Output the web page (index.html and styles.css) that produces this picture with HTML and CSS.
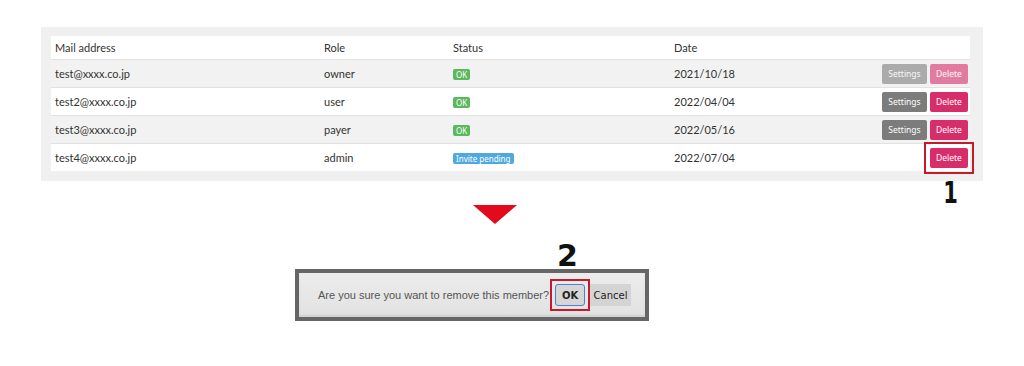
FILE: index.html
```html
<!DOCTYPE html>
<html lang="en">
<head>
    <meta charset="UTF-8">
    <meta name="viewport" content="width=device-width, initial-scale=1.0">
    <title>Remove member</title>
    <link rel="stylesheet" href="styles.css">
</head>
<body>

    <!-- Member list -->
    <div class="panel">
        <div class="members">
            <div class="row head">
                <div class="cell">Mail address</div>
                <div class="cell">Role</div>
                <div class="cell">Status</div>
                <div class="cell">Date</div>
                <div class="cell actions"></div>
            </div>
            <div class="row shade">
                <div class="cell">test@xxxx.co.jp</div>
                <div class="cell">owner</div>
                <div class="cell"><span class="badge ok">OK</span></div>
                <div class="cell">2021/10/18</div>
                <div class="cell actions faded">
                    <button class="btn settings">Settings</button>
                    <button class="btn delete">Delete</button>
                </div>
            </div>
            <div class="row">
                <div class="cell">test2@xxxx.co.jp</div>
                <div class="cell">user</div>
                <div class="cell"><span class="badge ok">OK</span></div>
                <div class="cell">2022/04/04</div>
                <div class="cell actions">
                    <button class="btn settings">Settings</button>
                    <button class="btn delete">Delete</button>
                </div>
            </div>
            <div class="row shade">
                <div class="cell">test3@xxxx.co.jp</div>
                <div class="cell">payer</div>
                <div class="cell"><span class="badge ok">OK</span></div>
                <div class="cell">2022/05/16</div>
                <div class="cell actions">
                    <button class="btn settings">Settings</button>
                    <button class="btn delete">Delete</button>
                </div>
            </div>
            <div class="row">
                <div class="cell">test4@xxxx.co.jp</div>
                <div class="cell">admin</div>
                <div class="cell"><span class="badge pending">Invite pending</span></div>
                <div class="cell">2022/07/04</div>
                <div class="cell actions">
                    <span class="mark">
                        <button class="btn delete">Delete</button>
                        <span class="step step-1">1</span>
                    </span>
                </div>
            </div>
        </div>
    </div>

    <!-- Arrow -->
    <div class="arrow"></div>

    <!-- Confirm dialog -->
    <div class="confirm-wrap">
        <div class="confirm">
            <span class="question">Are you sure you want to remove this member?</span>
            <span class="mark mark-ok">
                <button class="dlg-btn ok-btn">OK</button>
                <span class="step step-2">2</span>
            </span>
            <button class="dlg-btn cancel-btn">Cancel</button>
        </div>
    </div>

</body>
</html>
```

FILE: styles.css
```css
/* Basic Reset */
* {
    box-sizing: border-box;
    margin: 0;
    padding: 0;
}

body {
    font-family: Lato, 'Noto Sans', sans-serif;
    background: #fff;
    color: #333;
    width: 1024px;
    height: 366px;
    overflow: hidden;
}

/* Member list */
.panel {
    margin: 27px 0 0 41px;
    width: 942px;
    background: #f0f0f0;
    padding: 9px 13px 10px 10px;
}

.members {
    background: #fff;
}

.row {
    display: grid;
    grid-template-columns: 269px 129px 221px 1fr auto;
    align-items: center;
    height: 28px;
    border-top: 1px solid #e2e2e2;
    font-size: 11px;
}

.row.head {
    height: 23px;
    border-top: none;
}

.row.shade {
    background: #f2f2f2;
}

.cell {
    padding-left: 4px;
    white-space: nowrap;
}

.actions {
    display: flex;
    gap: 3px;
    padding-right: 2px;
}

.faded {
    opacity: 0.6;
}

.btn {
    font-family: 'Noto Sans', sans-serif;
    font-size: 8.5px;
    color: #fff;
    border: none;
    border-radius: 2px;
    height: 20px;
    cursor: pointer;
}

.settings {
    background: #7c7c7c;
    width: 45px;
}

.delete {
    background: #d82d6b;
    width: 38px;
}

.badge {
    display: inline-block;
    font-family: 'Noto Sans', sans-serif;
    font-size: 8px;
    color: #fff;
    border-radius: 2px;
    line-height: 11px;
    padding: 0 3px;
    vertical-align: middle;
}

.ok {
    background: #5cb85c;
}

.pending {
    background: #4ea9de;
}

/* Annotations */
.mark {
    position: relative;
    display: inline-flex;
    outline: 2px solid #c41a2c;
    outline-offset: 4px;
}

.step {
    position: absolute;
    font-family: 'DejaVu Sans', sans-serif;
    font-weight: bold;
    color: #111;
    line-height: 1;
}

.step-1 {
    top: 30px;
    left: 10px;
    font-size: 30px;
    transform: scaleX(0.7);
}

.step-2 {
    top: -43px;
    left: 2px;
    font-size: 30px;
}

/* Arrow */
.arrow {
    width: 0;
    height: 0;
    margin: 24px 0 0 473px;
    border-left: 22px solid transparent;
    border-right: 22px solid transparent;
    border-top: 19px solid #e20a1c;
}

/* Confirm dialog */
.confirm-wrap {
    margin: 45px 0 0 295px;
    width: 354px;
    height: 52px;
    background: #666;
    padding: 4px;
}

.confirm {
    height: 100%;
    background: linear-gradient(#ececec, #e2e2e2);
    box-shadow: inset 0 -2px 2px rgba(0, 0, 0, 0.08);
    display: flex;
    align-items: center;
    padding-left: 19px;
    font-family: 'Liberation Sans', Arial, sans-serif;
    font-size: 11px;
    color: #555;
    white-space: nowrap;
}

.question {
    width: 228px;
    margin-right: 9px;
}

.mark-ok {
    outline-offset: 3px;
}

.dlg-btn {
    height: 22px;
    font-family: 'DejaVu Sans', Verdana, sans-serif;
    font-size: 10px;
    color: #222;
    cursor: pointer;
}

.ok-btn {
    width: 30px;
    font-weight: bold;
    background: #d6d6d6;
    border: 1px solid #4b82d6;
    border-radius: 3px;
}

.cancel-btn {
    width: 41px;
    margin-left: 5px;
    background: #d4d4d4;
    border: none;
}
```
